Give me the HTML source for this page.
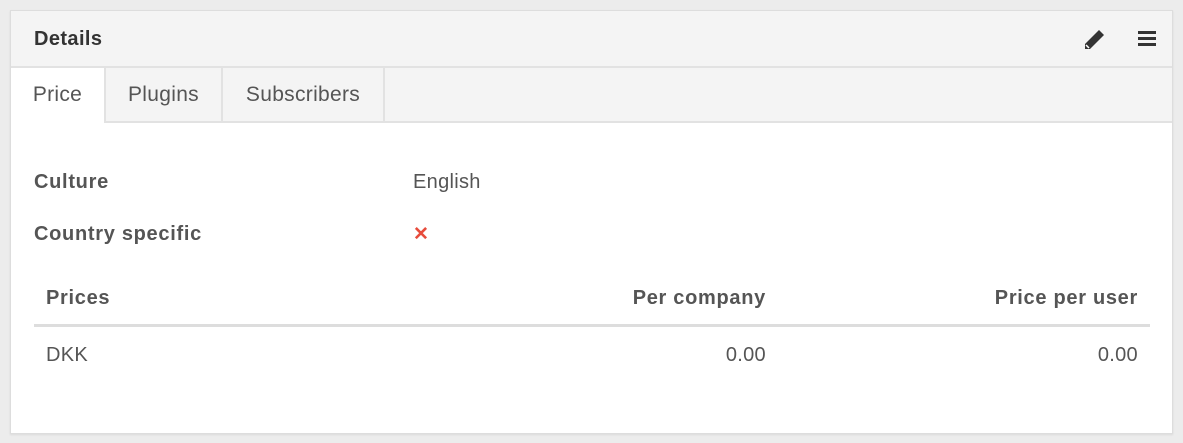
<!DOCTYPE html>
<html><head><style>
body{margin:0;background:#ececec;font-family:"Liberation Sans",sans-serif;color:#555;}
.panel{position:absolute;left:10px;top:10px;width:1161px;height:422px;background:#fff;border:1px solid #ddd;box-shadow:0 1px 2px rgba(0,0,0,.08);}
.hdr{position:absolute;left:0;top:0;width:1161px;height:55px;background:#f4f4f4;border-bottom:2px solid #e2e2e2;}
.hdr h1{position:absolute;left:23px;top:17px;margin:0;font-size:20px;font-weight:bold;color:#333;letter-spacing:0.4px;}
.tabs{position:absolute;left:0;top:57px;width:1161px;height:53px;background:#f4f4f4;border-bottom:2px solid #e2e2e2;}
.tab{position:absolute;top:0;height:53px;line-height:53px;text-align:center;font-size:21px;color:#555;border-right:2px solid #e2e2e2;box-sizing:border-box;letter-spacing:0.3px;}
.t{position:absolute;font-size:20px;white-space:nowrap;letter-spacing:0.3px;}
.b{font-weight:bold;letter-spacing:0.7px;}
</style></head><body>
<div class="panel">
<div class="hdr"><h1>Details</h1>
<svg style="position:absolute;left:1071px;top:17px" width="24" height="24" viewBox="0 0 24 24"><path d="M17 2l5 5L8 21H3v-5z" fill="#333"/><path d="M4 17l3 3" stroke="#fff" stroke-width="1.5"/></svg>
<svg style="position:absolute;left:1127px;top:19px" width="18" height="16"><rect y="1" width="18" height="3" fill="#333"/><rect y="7" width="18" height="3" fill="#333"/><rect y="13" width="18" height="3" fill="#333"/></svg>
</div>
<div class="tabs">
<div class="tab" style="left:0;width:95px;background:#fff;height:55px">Price</div>
<div class="tab" style="left:95px;width:117px">Plugins</div>
<div class="tab" style="left:212px;width:162px">Subscribers</div>
</div>
<div class="t b" style="left:23px;top:160px">Culture</div>
<div class="t" style="left:402px;top:160px">English</div>
<div class="t b" style="left:23px;top:212px">Country specific</div>
<div class="t b" style="left:402px;top:212px;color:#e74c3c;font-size:19px">✕</div>
<div class="t b" style="left:35px;top:276px">Prices</div>
<div class="t b" style="right:406px;top:276px">Per company</div>
<div class="t b" style="right:34px;top:276px">Price per user</div>
<div style="position:absolute;left:23px;top:313px;width:1116px;height:3px;background:#ddd"></div>
<div class="t" style="left:35px;top:333px">DKK</div>
<div class="t" style="right:406px;top:333px">0.00</div>
<div class="t" style="right:34px;top:333px">0.00</div>
</div>
</body></html>
